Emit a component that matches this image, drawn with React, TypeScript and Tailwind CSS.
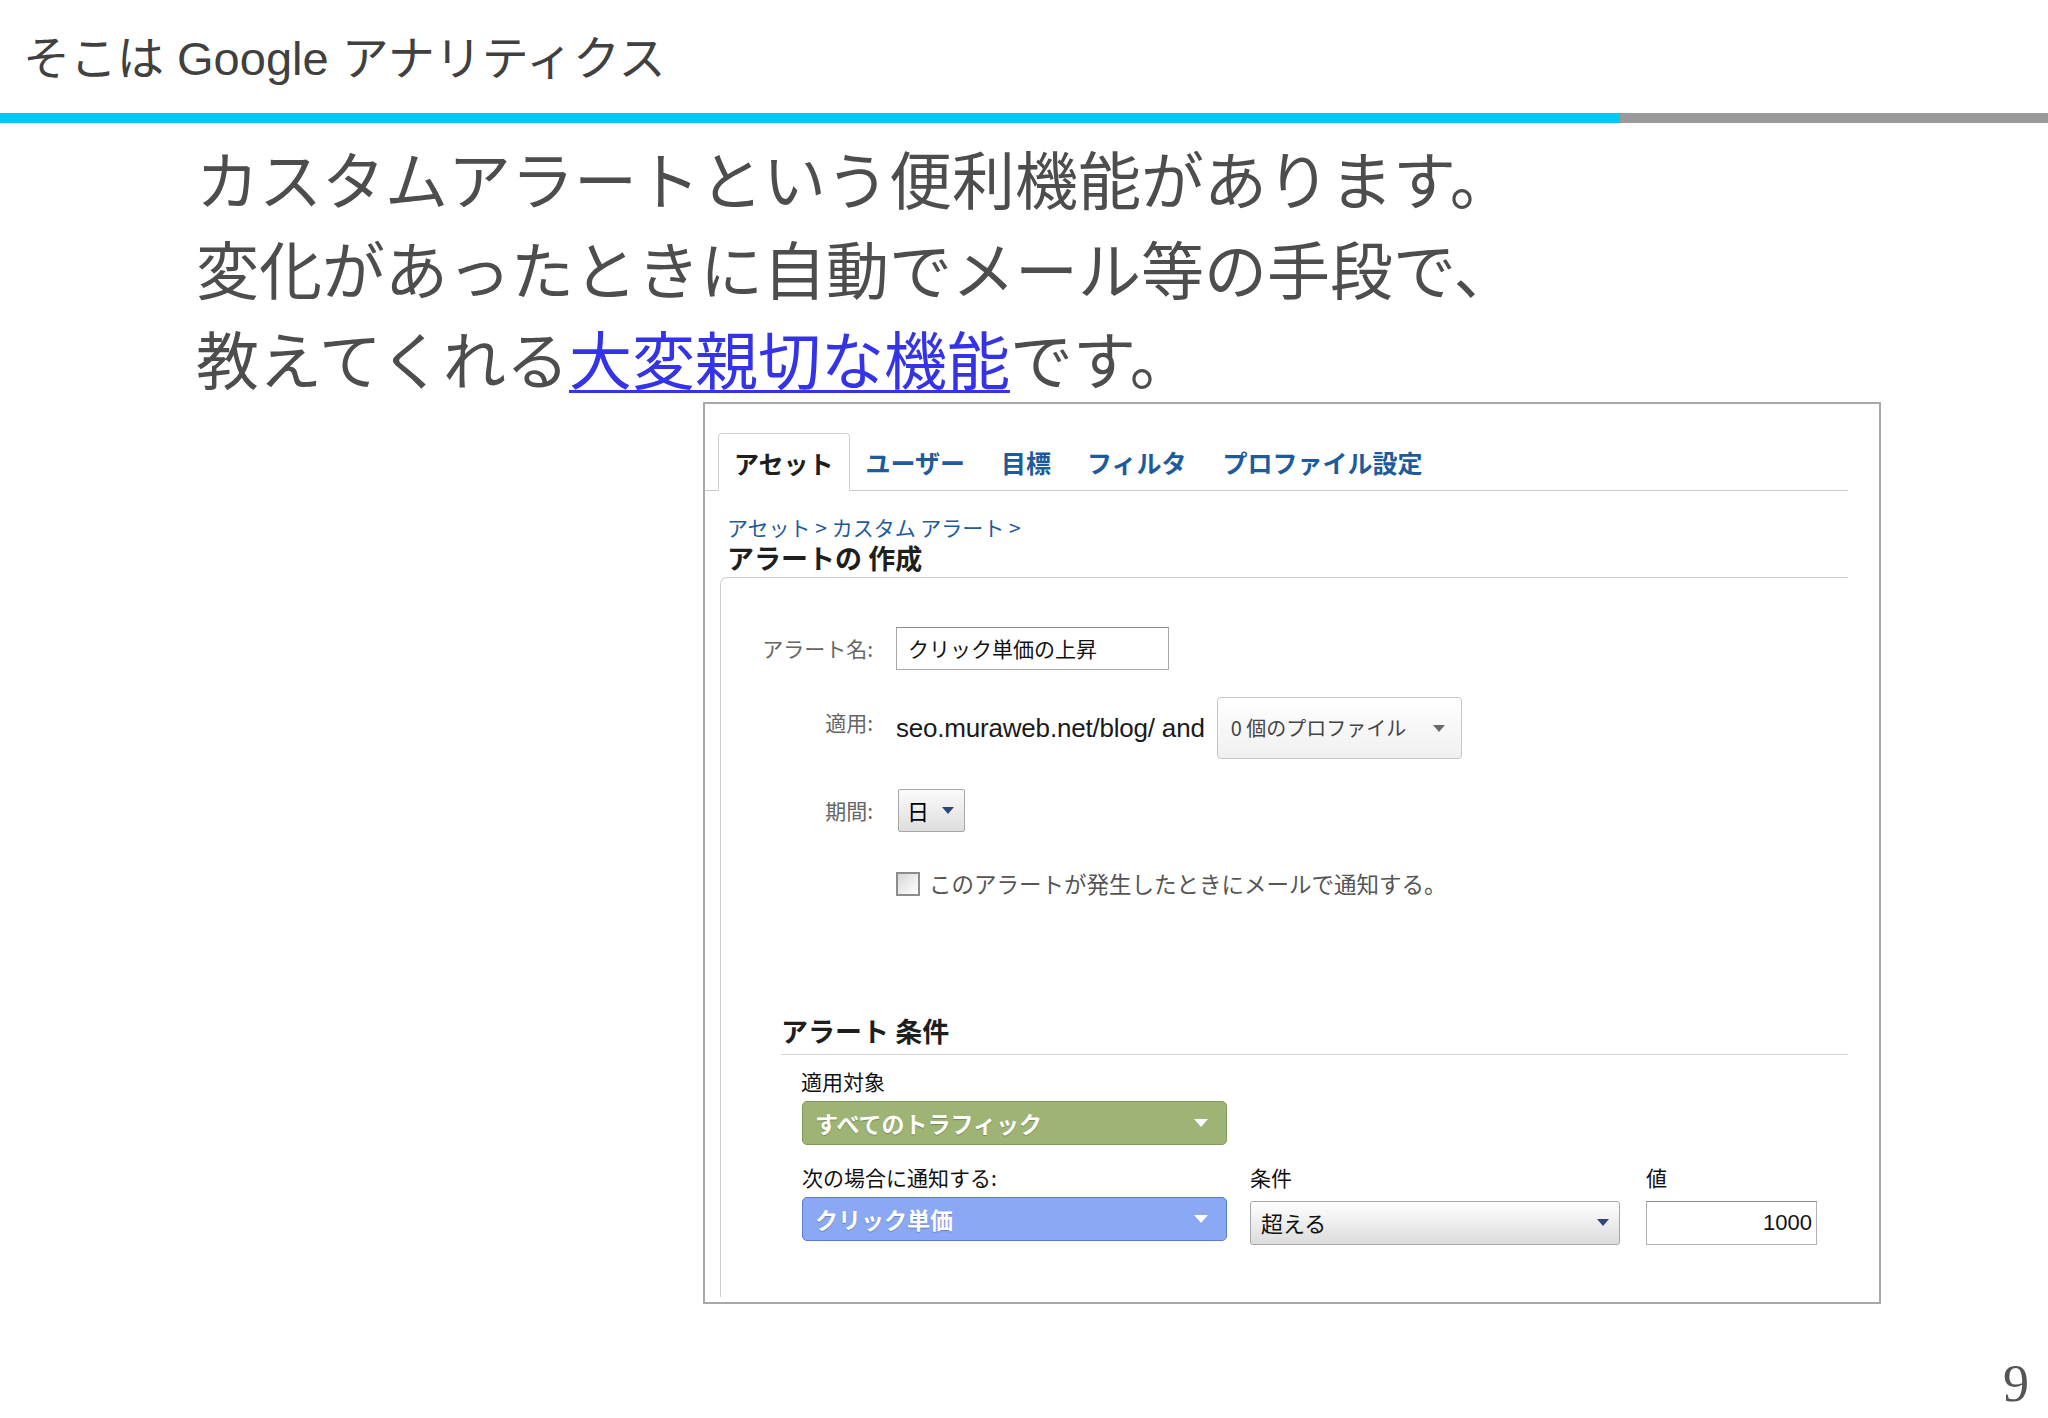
import React from "react";

const jp = { fontFamily: '"Noto Sans CJK JP", "Noto Sans", sans-serif' };
const latin = { fontFamily: '"Liberation Sans", "Noto Sans CJK JP", sans-serif' };

const Caret = ({ className }: { className: string }) => (
  <svg width="14" height="8" viewBox="0 0 14 8" className={className}>
    <path d="M0 0 H14 L7 8 Z" fill="currentColor" />
  </svg>
);

const Label = ({ children }: { children: React.ReactNode }) => (
  <div className="w-[154px] shrink-0 text-right text-[21px] text-[#666] pr-[2px]">{children}</div>
);

const AlertForm = () => (
  <div
    className="ml-[703px] w-[1178px] h-[902px] border-2 border-[#a8a8a8] bg-white flex flex-col"
    style={jp}
  >
    {/* tabs */}
    <div className="mt-[28px] mr-[31px] flex items-end border-b border-[#c9c9c9] pl-[13px]">
      <div className="h-[58px] -mb-px px-[15px] pt-[3px] flex items-center border border-b-white border-[#cfcfcf] rounded-t-[4px] bg-white text-[25px] font-bold text-[#1e1e1e]">
        アセット
      </div>
      <div className="h-[58px] pt-[3px] flex items-center gap-[36px] pl-[16px] text-[25px] font-bold text-[#1d5b9b]">
        <span>ユーザー</span>
        <span>目標</span>
        <span>フィルタ</span>
        <span>プロファイル設定</span>
      </div>
    </div>

    {/* breadcrumb + title */}
    <div className="ml-[22px] mt-[22px] text-[21px] leading-[28px] text-[#1d5b9b]">
      アセット &gt; カスタム アラート &gt;
    </div>
    <div className="ml-[22px] mt-[2px] text-[27px] leading-[30px] font-bold text-[#1e1e1e]">
      アラートの 作成
    </div>

    {/* panel */}
    <div className="ml-[15px] mr-[31px] mt-[4px] flex-1 mb-[5px] border-t border-l border-[#cdcdcd] rounded-tl-[7px] flex flex-col">
      <div className="mt-[49px] flex items-center gap-[21px]">
        <Label>アラート名:</Label>
        <div className="w-[273px] h-[43px] border border-[#a9a9a9] border-t-[#8a8a8a] flex items-center pl-[11px] text-[21px] text-[#111]">
          クリック単価の上昇
        </div>
      </div>

      <div className="mt-[27px] flex items-center gap-[21px]">
        <div className="self-start pt-[10px]">
          <Label>適用:</Label>
        </div>
        <div className="flex items-center gap-[12px]">
          <span className="text-[26px] text-[#1a1a1a] tracking-[-0.2px]" style={latin}>
            seo.muraweb.net/blog/ and
          </span>
          <div className="w-[245px] h-[62px] rounded-[4px] border border-[#c6c6c6] bg-gradient-to-b from-white to-[#f0f0f0] flex items-center justify-between pl-[13px] pr-[16px] text-[20px] text-[#444]">
            <span>0 個のプロファイル</span>
            <Caret className="text-[#6a6a6a] w-[12px] h-[7px]" />
          </div>
        </div>
      </div>

      <div className="mt-[30px] flex items-center gap-[21px]">
        <Label>期間:</Label>
        <div className="ml-[2px] w-[67px] h-[43px] rounded-[2px] border border-[#a6a6a6] bg-gradient-to-b from-[#fbfbfb] to-[#dedede] flex items-center justify-between pl-[8px] pr-[10px] text-[22px] text-black">
          <span>日</span>
          <Caret className="text-[#2d4578] w-[12px] h-[7px]" />
        </div>
      </div>

      <div className="mt-[35px] ml-[175px] flex items-center gap-[9px]">
        <div className="w-[24px] h-[24px] border-2 border-[#8c8c8c] bg-gradient-to-br from-[#d8d8d8] to-white" />
        <span className="text-[22.5px] text-[#555]">このアラートが発生したときにメールで通知する。</span>
      </div>

      {/* conditions */}
      <div className="ml-[60px] mt-[114px] flex flex-col">
        <div className="text-[27px] leading-[32px] font-bold text-[#1e1e1e] pb-[7px] border-b border-[#d6d6d6]">
          アラート 条件
        </div>
        <div className="ml-[20px] mt-[12px] text-[21px] leading-[28px] text-[#111]">適用対象</div>
        <div className="ml-[21px] mt-[6px] w-[425px] h-[44px] rounded-[5px] border border-[#7e9a58] bg-[#9db474] flex items-center justify-between pl-[12px] pr-[18px] text-[23px] font-bold text-white">
          <span className="[text-shadow:0_1px_1px_rgba(0,0,0,0.25)]">すべてのトラフィック</span>
          <Caret className="text-white" />
        </div>

        <div className="ml-[21px] mt-[18px] flex items-start gap-[23px]">
          <div className="flex flex-col w-[425px]">
            <div className="text-[21px] leading-[28px] text-[#111]">次の場合に通知する:</div>
            <div className="mt-[6px] h-[44px] rounded-[5px] border border-[#5b7bd2] bg-[#8aa8f4] flex items-center justify-between pl-[12px] pr-[18px] text-[23px] font-bold text-white">
              <span className="[text-shadow:0_1px_1px_rgba(0,0,0,0.25)]">クリック単価</span>
              <Caret className="text-white" />
            </div>
          </div>
          <div className="flex flex-col w-[370px]">
            <div className="text-[21px] leading-[28px] text-[#111]">条件</div>
            <div className="mt-[10px] h-[44px] rounded-[3px] border border-[#a8a8a8] bg-gradient-to-b from-white to-[#dcdcdc] flex items-center justify-between pl-[10px] pr-[10px] text-[22px] text-[#111]">
              <span>超える</span>
              <Caret className="text-[#2d4578] w-[12px] h-[7px]" />
            </div>
          </div>
          <div className="ml-[3px] flex flex-col w-[171px]">
            <div className="text-[21px] leading-[28px] text-[#111]">値</div>
            <div
              className="mt-[10px] h-[44px] border border-[#b0b0b0] border-t-[#8e8e8e] flex items-center justify-end pr-[4px] text-[22px] text-[#111]"
              style={latin}
            >
              1000
            </div>
          </div>
        </div>
      </div>
    </div>
  </div>
);

export default function App() {
  return (
    <div className="w-[2048px] h-[1418px] bg-white overflow-hidden flex flex-col">
      <div className="h-[113px] pt-[36px] pl-[23px] text-[47px] leading-[46px] text-[#404040]" style={latin}>
        そこは Google アナリティクス
      </div>
      <div className="flex h-[10px]">
        <div className="w-[1620px] bg-[#00c9f7]" />
        <div className="flex-1 bg-[#9a9a9a]" />
      </div>

      <div className="mt-[9px] pl-[196px] text-[63px] leading-[90px] text-[#4d4d4d]" style={jp}>
        <div>カスタムアラートという便利機能があります。</div>
        <div>変化があったときに自動でメール等の手段で、</div>
        <div>
          教えてくれる
          <a className="text-[#3434e6] underline underline-offset-[6px] decoration-[3px]">大変親切な機能</a>
          です。
        </div>
      </div>

      <AlertForm />

      <div
        className="mt-[54px] pr-[19px] flex justify-end text-[52px] leading-[52px] text-[#555]"
        style={{ fontFamily: '"Liberation Serif", serif' }}
      >
        9
      </div>
    </div>
  );
}
